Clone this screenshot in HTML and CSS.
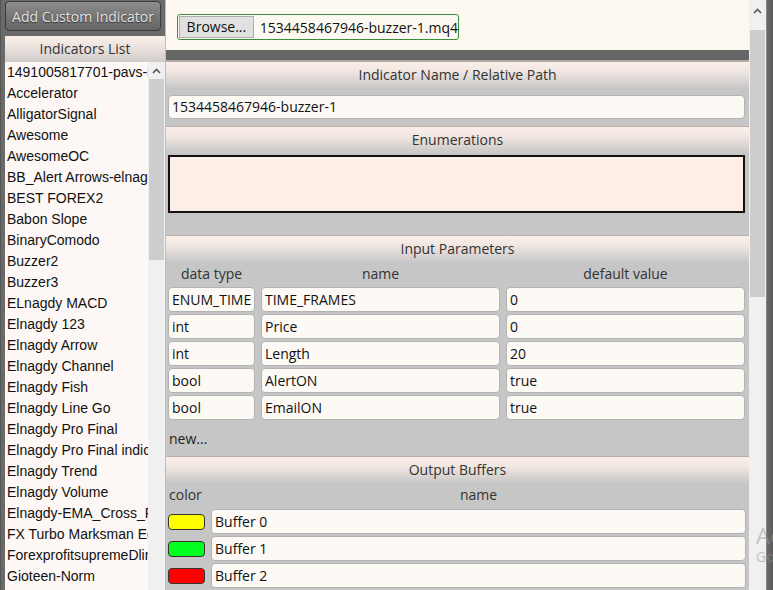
FILE: index.html
```html
<!DOCTYPE html>
<html>
<head>
<meta charset="utf-8">
<link rel="stylesheet" href="styles.css">
</head>
<body>
<div class="app">
  <aside class="left">
    <button class="add-btn">Add Custom Indicator</button>
    <div class="list-panel">
      <div class="list-head">Indicators List</div>
      <div class="list-body">
        <ul class="list">
          <li>1491005817701-pavs-indicator</li>
          <li>Accelerator</li>
          <li>AlligatorSignal</li>
          <li>Awesome</li>
          <li>AwesomeOC</li>
          <li>BB_Alert Arrows-elnagdy</li>
          <li>BEST FOREX2</li>
          <li>Babon Slope</li>
          <li>BinaryComodo</li>
          <li>Buzzer2</li>
          <li>Buzzer3</li>
          <li>ELnagdy MACD</li>
          <li>Elnagdy 123</li>
          <li>Elnagdy Arrow</li>
          <li>Elnagdy Channel</li>
          <li>Elnagdy Fish</li>
          <li>Elnagdy Line Go</li>
          <li>Elnagdy Pro Final</li>
          <li>Elnagdy Pro Final indicator</li>
          <li>Elnagdy Trend</li>
          <li>Elnagdy Volume</li>
          <li>Elnagdy-EMA_Cross_Filter</li>
          <li>FX Turbo Marksman Edition</li>
          <li>ForexprofitsupremeDlines</li>
          <li>Gioteen-Norm</li>
        </ul>
        <div class="vscroll small">
          <div class="arrow"><svg width="9" height="6" viewBox="0 0 9 6"><path d="M1 5 L4.5 1.5 L8 5" fill="none" stroke="#555" stroke-width="1.6"/></svg></div>
          <div class="thumb"></div>
        </div>
      </div>
    </div>
  </aside>

  <main class="right">
    <div class="content">
      <div class="filebar">
        <div class="file-input">
          <span class="browse">Browse...</span>
          <span class="filename">1534458467946-buzzer-1.mq4</span>
        </div>
      </div>
      <div class="darkbar"></div>

      <section class="sec sec-name">
        <div class="sec-head">Indicator Name / Relative Path</div>
        <div class="sec-body">
          <div class="field full">1534458467946-buzzer-1</div>
        </div>
      </section>

      <section class="sec sec-enum">
        <div class="sec-head">Enumerations</div>
        <div class="sec-body">
          <div class="enum-box"></div>
        </div>
      </section>

      <section class="sec sec-params">
        <div class="sec-head">Input Parameters</div>
        <div class="sec-body">
          <div class="param-grid">
            <div class="col-h">data type</div>
            <div class="col-h">name</div>
            <div class="col-h">default value</div>
            <div class="field"><span class="clip">ENUM_TIMEFRAMES</span></div><div class="field">TIME_FRAMES</div><div class="field">0</div>
            <div class="field">int</div><div class="field">Price</div><div class="field">0</div>
            <div class="field">int</div><div class="field">Length</div><div class="field">20</div>
            <div class="field">bool</div><div class="field">AlertON</div><div class="field">true</div>
            <div class="field">bool</div><div class="field">EmailON</div><div class="field">true</div>
          </div>
          <div class="new-link">new...</div>
        </div>
      </section>

      <section class="sec sec-out">
        <div class="sec-head">Output Buffers</div>
        <div class="sec-body">
          <div class="buf-grid">
            <div class="col-h left-h">color</div>
            <div class="col-h">name</div>
            <div class="swatch yellow"></div><div class="field">Buffer 0</div>
            <div class="swatch green"></div><div class="field">Buffer 1</div>
            <div class="swatch red"></div><div class="field">Buffer 2</div>
          </div>
        </div>
      </section>
    </div>
    <div class="vscroll big">
      <div class="arrow"><svg width="9" height="6" viewBox="0 0 9 6"><path d="M1 5 L4.5 1.5 L8 5" fill="none" stroke="#555" stroke-width="1.6"/></svg></div>
      <div class="thumb"></div>
    </div>
    <div class="edge"></div>
    <div class="watermark"><div class="wm1">Activate Windows</div><div class="wm2">Go to Settings to activate Windows.</div></div>
  </main>
</div>
</body>
</html>
```

FILE: styles.css
```css
* { box-sizing: border-box; }
html, body {
  margin: 0;
  padding: 0;
  width: 773px;
  height: 590px;
  overflow: hidden;
  background: #6a6a6a;
  font-family: "Open Sans", "Noto Sans", sans-serif;
  font-size: 14px;
  color: #222;
}
.app {
  display: flex;
  width: 773px;
  height: 590px;
  overflow: hidden;
}

/* left column */
.left {
  width: 165px;
  flex: none;
  display: flex;
  flex-direction: column;
  padding: 1px 0 0 4px;
  background: #6a6a6a;
  border-left: 1px solid #555;
}
.add-btn {
  width: 156px;
  height: 30px;
  flex: none;
  margin: 0;
  padding: 0;
  border: 1px solid #3a3a3a;
  border-radius: 4px;
  background: linear-gradient(#8e8e8e, #727272 60%, #666);
  color: #e2e2e2;
  font-family: "Open Sans", sans-serif;
  font-size: 14px;
  text-shadow: 0 1px 1px #333;
  text-align: center;
}
.list-panel {
  margin-top: 5px;
  flex: 1;
  display: flex;
  flex-direction: column;
  min-height: 0;
  background: #fdf8f5;
}
.list-head {
  height: 26px;
  flex: none;
  line-height: 26px;
  text-align: center;
  color: #333;
  background: linear-gradient(#faefe8, #efe6e1 35%, #cfcccb);
}
.list-body {
  flex: 1;
  display: flex;
  min-height: 0;
}
.list {
  list-style: none;
  margin: 0;
  padding: 0 0 0 2px;
  flex: 1;
  overflow: hidden;
  font-family: "Liberation Sans", Arial, sans-serif;
  font-size: 14px;
  color: #111;
}
.list li {
  height: 21px;
  line-height: 21px;
  white-space: nowrap;
  overflow: hidden;
}

.vscroll {
  width: 17px;
  flex: none;
  background: #f0f0f0;
  display: flex;
  flex-direction: column;
}
.vscroll .arrow {
  height: 17px;
  flex: none;
  display: flex;
  align-items: center;
  justify-content: center;
}
.vscroll.small .thumb {
  margin: 0 1px;
  height: 181px;
  flex: none;
  background: #cdcdcd;
}
.vscroll.big .arrow { height: 30px; align-items: flex-start; padding-top: 8px; }
.vscroll.big .thumb {
  margin: 0 1px;
  height: 267px;
  flex: none;
  background: #cdcdcd;
}

/* right area */
.right {
  flex: 1;
  display: flex;
  position: relative;
  min-width: 0;
}
.content {
  width: 584px;
  flex: none;
  display: flex;
  flex-direction: column;
  background: #c6c6c6;
  border-left: 1px solid #bdbdbd;
  overflow: hidden;
}
.content > * { flex: none; }
.filebar {
  height: 50px;
  background: #fdf9f0;
  padding: 14px 0 0 11px;
}
.file-input {
  width: 282px;
  height: 26px;
  border: 1px solid #3c8c3c;
  border-radius: 3px;
  background: #fdf9f0;
  display: flex;
  align-items: center;
  padding-left: 1px;
}
.browse {
  width: 75px;
  height: 22px;
  line-height: 20px;
  text-align: center;
  background: #e1e1e1;
  border: 1px solid #adadad;
  color: #111;
}
.filename {
  padding-left: 6px;
  color: #111;
  white-space: nowrap;
}
.darkbar {
  height: 11px;
  background: #666;
  border-bottom: 1px solid #a9a9a9;
}

.sec {
  background: #c6c6c6;
  border-top: 1px solid #b8aeaa;
}
.sec-head {
  height: 26px;
  line-height: 26px;
  text-align: center;
  color: #333;
  background: linear-gradient(#fbefe8, #f1e7e1 35%, #c8c8c8);
}
.sec-body {
  padding: 0 4px 0 2px;
}
.field {
  height: 25px;
  line-height: 23px;
  padding: 0 3px;
  border: 1px solid #b3b3b3;
  border-radius: 4px;
  background: #fdf9f5;
  color: #111;
  white-space: nowrap;
  overflow: hidden;
}
.clip {
  display: block;
  overflow: hidden;
  white-space: nowrap;
}
.sec-name .sec-body { padding-top: 7px; padding-bottom: 7px; }
.sec-name .field { height: 24px; line-height: 22px; }

.sec-enum .sec-body { padding-top: 2px; padding-bottom: 22px; }
.enum-box {
  height: 58px;
  border: 2px solid #111;
  background: #fdeee6;
}

.sec-params .sec-body { padding-bottom: 4px; }
.param-grid {
  display: grid;
  grid-template-columns: 87px 239px 239px;
  column-gap: 6px;
  row-gap: 2px;
}
.col-h {
  height: 22px;
  line-height: 22px;
  text-align: center;
  color: #333;
  margin-top: 1px;
}
.new-link {
  height: 26px;
  line-height: 26px;
  padding-left: 1px;
  margin-top: 6px;
  color: #222;
}

.sec-out .sec-body { padding-top: 0; }
.buf-grid {
  display: grid;
  grid-template-columns: 37px 535px;
  column-gap: 6px;
  row-gap: 2px;
  align-items: center;
}
.sec-out .col-h { height: 24px; line-height: 24px; margin-top: 0; }
.col-h.left-h { text-align: left; padding-left: 1px; }
.swatch {
  height: 16px;
  border: 1px solid #333;
  border-radius: 4px;
}
.swatch.yellow { background: #ffff00; }
.swatch.green { background: #00ff1e; }
.swatch.red { background: #ff0000; }

.vscroll.big { height: 590px; }
.edge {
  flex: 1;
  background: #666;
  border-left: 1px solid #888;
  border-right: 2px solid #5a5a5a;
}
.watermark {
  position: absolute;
  left: 591px;
  top: 522px;
  color: rgba(150,150,150,0.55);
  white-space: nowrap;
  pointer-events: none;
  overflow: hidden;
  width: 17px;
}
.wm1 { font-size: 22px; line-height: 26px; }
.wm2 { font-size: 14px; line-height: 18px; }
```
